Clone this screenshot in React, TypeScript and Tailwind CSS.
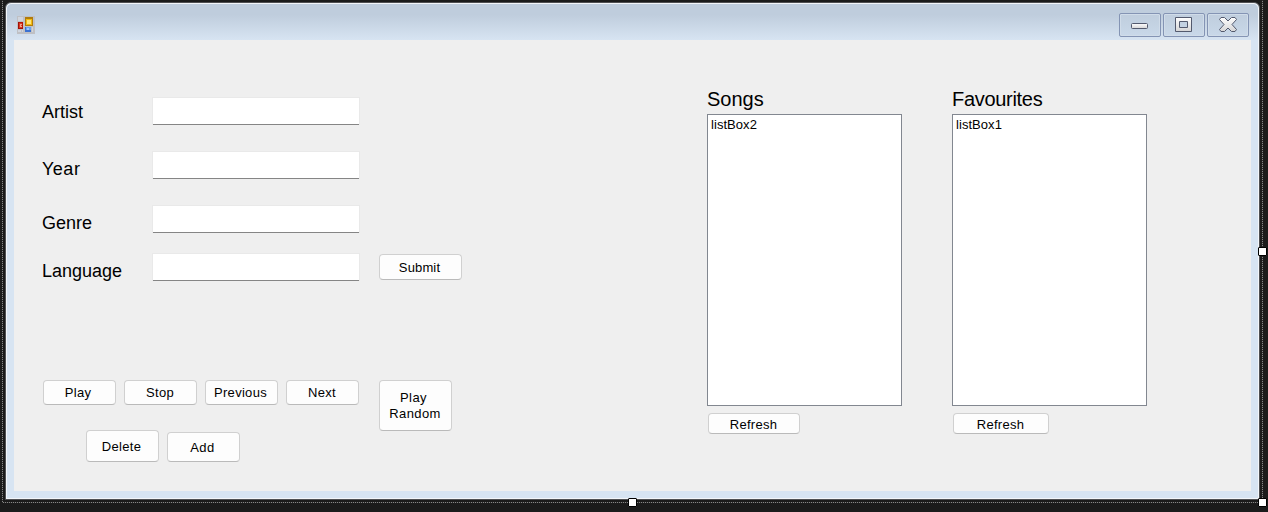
import React from 'react';

const FIELDS = [
  { label: 'Artist', row: 'mb-[26px]', text: 'pt-[1px]' },
  { label: 'Year', row: 'mb-[26px]', text: 'pt-[4px] tracking-[0.5px]' },
  { label: 'Genre', row: 'mb-[20px]', text: 'pt-[4px]' },
  { label: 'Language', row: '', text: 'pt-[4px]' },
];

const LISTS = [
  { title: 'Songs', item: 'listBox2', button: 'w-[92px]', spacing: 'tracking-normal' },
  { title: 'Favourites', item: 'listBox1', button: 'w-[96px]', spacing: 'tracking-[-0.3px]' },
];

function Button({ className, children }: { className: string; children: React.ReactNode }) {
  return (
    <button
      className={`flex shrink-0 items-center justify-center rounded-[4px] border border-[#d0d0d0] border-b-[#bababa] bg-[#fdfdfd] text-center text-[13px] leading-[16px] text-black ${className}`}
    >
      {children}
    </button>
  );
}

function FormIcon() {
  return (
    <svg width="18" height="18" viewBox="0 0 18 18" shapeRendering="crispEdges">
      <path fill="#bfc0c4" d="M0 0h18v18H0z" />
      <path fill="#d0d5de" d="M1 1h5v4H1zM1 14h3v2H1zM5 14h1v2H5zM15 11h1v5h-1z" />
      <path fill="#b81708" d="M1 6h5v7H1z" />
      <path fill="#d83a20" d="M2 7h3v5H2z" />
      <path fill="#a01008" d="M1 6h1v7H1zM1 12h5v1H1z" />
      <path fill="#f5a58c" d="M3 8h2v3H3z" />
      <path fill="#d83a20" d="M4 9h1v1H4z" />
      <path fill="#b17c0a" d="M8 1h8v9H8z" />
      <path fill="#f2b90f" d="M9 3h6v6H9z" />
      <path fill="#ffe477" d="M10 4h4v4h-4z" />
      <path fill="#3b72d2" d="M8 11h6v5H8z" />
      <path fill="#69a2ee" d="M9 11h5v3H9z" />
      <path fill="#a0c9fa" d="M10 12h2v2h-2z" />
    </svg>
  );
}

function CaptionButton({ children }: { children: React.ReactNode }) {
  return (
    <div className="flex h-6 w-[42px] items-center justify-center rounded-[2px] border border-[#8494b4] bg-linear-to-b from-[#bfcddd] to-[#c9d8e9] shadow-[inset_0_0_0_1px_#d0dce9]">
      <svg width="20" height="20" viewBox="0 0 20 20">
        <defs>
          <linearGradient id="glyph" x1="0" y1="0" x2="0" y2="1">
            <stop offset="0" stopColor="#ffffff" />
            <stop offset="1" stopColor="#d5d5d6" />
          </linearGradient>
        </defs>
        {children}
      </svg>
    </div>
  );
}

function Handle({ className }: { className: string }) {
  return <div className={`absolute size-[9px] rounded-[1px] border border-black bg-white ${className}`} />;
}

export default function App() {
  return (
    <div className="relative h-[512px] w-[1268px] overflow-hidden bg-[#1b1b1b] pt-[2px] pl-[5px] font-['Liberation_Sans',Arial,sans-serif] text-black">
      <div className="flex h-[498px] w-[1255px] flex-col rounded-t-[6px] rounded-b-[1px] border border-[#4f5053] bg-[#d7e4f2] shadow-[inset_0_0_0_1px_#f3f6fa]">
        <header className="m-px mb-0 flex h-9 shrink-0 items-start justify-between rounded-t-[5px] bg-linear-to-b from-[#bfcddd] from-30% to-[#d7e4f2] pt-[9px] pr-[9px] pl-[10px]">
          <div className="pt-[3px]">
            <FormIcon />
          </div>
          <div className="flex gap-[2px]">
            <CaptionButton>
              <rect x="1.5" y="8.5" width="16" height="5" rx="1" fill="url(#glyph)" stroke="#535a6e" />
            </CaptionButton>
            <CaptionButton>
              <path
                fill="url(#glyph)"
                stroke="#535a6e"
                strokeLinejoin="round"
                fillRule="evenodd"
                d="M1.5 2.5h16v14h-16zM5.5 6.5v6h8v-6z"
              />
            </CaptionButton>
            <CaptionButton>
              <path
                fill="url(#glyph)"
                stroke="#535a6e"
                strokeLinejoin="round"
                d="M3 2.5h3.5L10 6l3.5-3.5H17l1.5 2-4.5 5 4.5 5-1.5 2h-3.5L10 13l-3.5 3.5H3l-1.5-2 4.5-5-4.5-5z"
              />
            </CaptionButton>
          </div>
        </header>

        <main className="ml-2 flex h-[451px] w-[1237px] bg-[#efefef] pl-[28px]">
          <section className="w-[665px] shrink-0 pt-[57px]">
            <div className="flex h-[184px] items-end">
              <div className="w-[318px] self-start">
                {FIELDS.map(({ label, row, text }) => (
                  <label key={label} className={`flex h-7 items-start ${row}`}>
                    <span className={`w-[110px] text-[18px] leading-[28px] ${text}`}>{label}</span>
                    <span className="flex h-7 w-[208px] border border-b-0 border-[#e9e9e9]">
                      <input className="h-[27px] w-[206px] border-b border-[#858585] bg-white px-1 text-[18px] outline-none" />
                    </span>
                  </label>
                ))}
              </div>
              <Button className="mb-px ml-[19px] h-[26px] w-[83px] pt-px pr-[2px] tracking-[0.15px]">Submit</Button>
            </div>

            <div className="mt-[99px] flex items-start pl-px">
              <div className="mr-[20px] flex gap-2">
                <Button className="h-[25px] w-[73px] pr-[3px] tracking-[0.3px]">Play</Button>
                <Button className="h-[25px] w-[73px] pr-[1px] tracking-[0.3px]">Stop</Button>
                <Button className="h-[25px] w-[73px] pr-[2px] tracking-[0.3px]">Previous</Button>
                <Button className="h-[25px] w-[73px] pr-[1px] tracking-[0.3px]">Next</Button>
              </div>
              <Button className="h-[51px] w-[73px] pr-[1px] tracking-[0.4px]">
                <span>
                  <span className="mr-[3px]">Play</span>
                  <br />
                  Random
                </span>
              </Button>
            </div>
            <div className="-mt-px flex items-end gap-2 pl-[44px]">
              <Button className="h-8 w-[73px] pt-px pr-[2px] tracking-[0.3px]">Delete</Button>
              <Button className="h-[30px] w-[73px] pt-[2px] pr-[2px] tracking-[0.5px]">Add</Button>
            </div>
          </section>

          <section className="flex gap-[50px] pt-[47px]">
            {LISTS.map(({ title, item, button, spacing }) => (
              <div key={title} className="w-[195px]">
                <h2 className={`h-[27px] text-[20px] leading-[24px] ${spacing}`}>{title}</h2>
                <ul className="h-[292px] border border-[#828790] bg-white pt-[2px] pl-[3px] text-[13px] leading-[16px] tracking-[0.05px]">
                  <li>{item}</li>
                </ul>
                <Button className={`mt-[7px] ml-px h-[21px] pt-[3px] pr-px tracking-[0.3px] ${button}`}>Refresh</Button>
              </div>
            ))}
          </section>
        </main>
      </div>

      <div className="absolute top-0 left-[2px] h-[503px] w-px bg-[repeating-linear-gradient(to_bottom,#2a2a2a_0_1px,#858585_1px_2px)]" />
      <div className="absolute top-0 left-[1262px] h-[503px] w-px bg-[repeating-linear-gradient(to_bottom,#2a2a2a_0_1px,#858585_1px_2px)]" />
      <div className="absolute top-[502px] left-[2px] h-px w-[1261px] bg-[repeating-linear-gradient(to_right,#2a2a2a_0_1px,#858585_1px_2px)]" />
      <Handle className="top-[247px] left-[1258px]" />
      <Handle className="top-[498px] left-[1258px]" />
      <Handle className="top-[498px] left-[628px]" />
    </div>
  );
}
